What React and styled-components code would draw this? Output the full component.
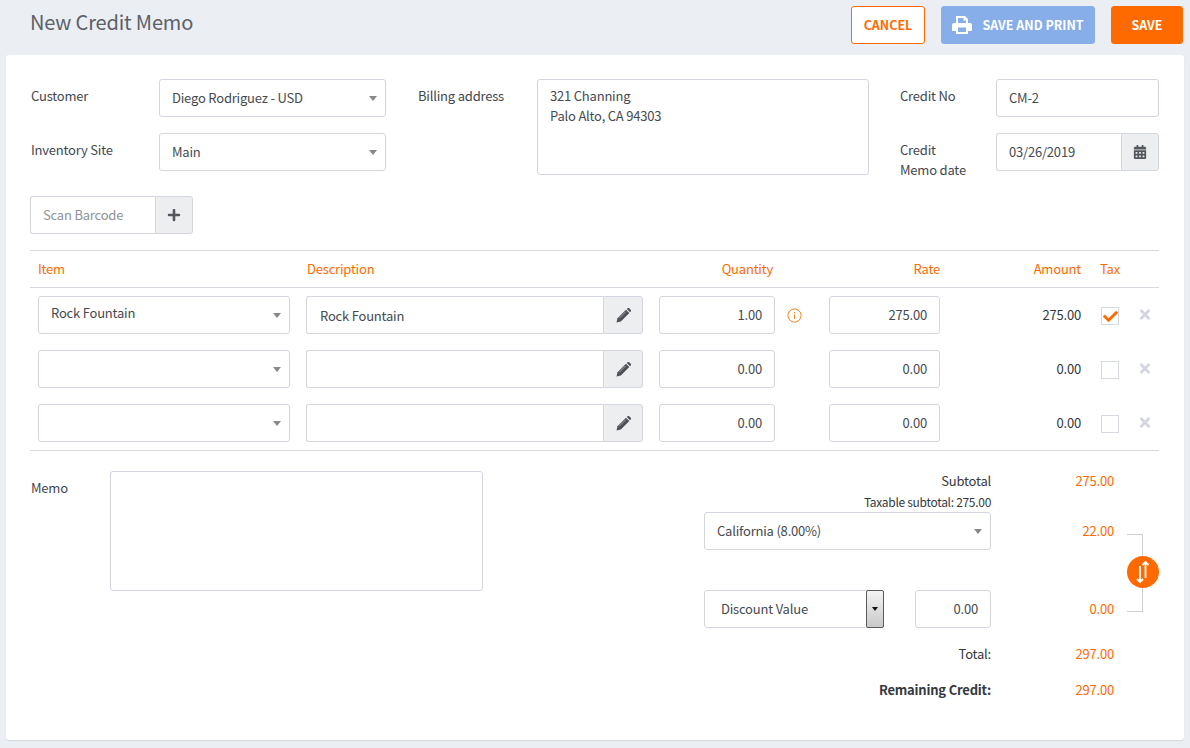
import React from 'react';
import styled, { createGlobalStyle } from 'styled-components';
import { FaCalendarAlt, FaCheck, FaPlus, FaTimes } from 'react-icons/fa';

const ORANGE = '#ff6a00';
const BORDER = '#d3d6e0';

const GlobalStyle = createGlobalStyle`
  html, body {
    margin: 0;
    padding: 0;
    background: #ebeef3;
  }
  body {
    font-family: "Noto Sans CJK SC", "Noto Sans", sans-serif;
    font-size: 13px;
    letter-spacing: -0.2px;
    line-height: 20px;
    color: #464a50;
  }
  * { box-sizing: border-box; }
`;

const Page = styled.div`
  width: 1190px;
  height: 748px;
  padding: 6px 6px 8px;
  overflow: hidden;
`;

const TopBar = styled.header`
  display: flex;
  align-items: flex-start;
  height: 49px;
`;

const Title = styled.h1`
  flex: 1;
  margin: 0;
  padding: 3px 0 0 24px;
  font-size: 20px;
  letter-spacing: -0.15px;
  line-height: 26px;
  font-weight: 400;
  color: #5c6168;
`;

const Actions = styled.div`
  display: flex;
  gap: 16px;
  padding-right: 1px;
`;

const Button = styled.button`
  display: flex;
  align-items: center;
  justify-content: center;
  gap: 10px;
  width: ${props => props.$width}px;
  height: 38px;
  padding: 0;
  border: 1px solid ${props => props.$outline ? ORANGE : props.$bg};
  border-radius: 3px;
  background: ${props => props.$outline ? '#fff' : props.$bg};
  color: ${props => props.$outline ? ORANGE : '#fff'};
  font: 600 12.5px/20px "Noto Sans CJK SC", "Noto Sans", sans-serif;
`;

const Card = styled.main`
  position: relative;
  height: 685px;
  padding: 24px 25px 0 24px;
  background: #fff;
  border-radius: 3px;
  box-shadow: 0 1px 1px #d3d8de;
`;

const Pair = styled.div`
  display: flex;
  width: ${props => props.$width}px;
  margin-bottom: 16px;
`;

const Label = styled.label`
  display: block;
  flex: none;
  width: ${props => props.$width}px;
  padding: 7px 0 0 ${props => props.$inset ? 1 : 0}px;
  color: #43474d;
`;

const Fields = styled.div`
  display: flex;
  gap: 31px;
  height: 117px;
`;

const Column = styled.div`
  display: flex;
  flex-direction: column;
`;

const Control = styled.div`
  position: relative;
  display: flex;
  align-items: center;
  flex: ${props => props.$width ? 'none' : 1};
  width: ${props => props.$width ? props.$width + 'px' : 'auto'};
  height: 38px;
  padding: ${props => props.$drop ? '2px' : '0'} 12px ${props => props.$lift ? '4px' : '0'} ${props => props.$indent || 12}px;
  background: #fff;
  border: 1px solid ${BORDER};
  border-radius: 3px;
  color: #464a50;
  justify-content: ${props => props.$right ? 'flex-end' : 'flex-start'};
`;

const Placeholder = styled.span`
  color: #8e9299;
`;

const Caret = styled.span`
  position: absolute;
  right: 8px;
  top: 16px;
  width: 0;
  height: 0;
  border-left: 4px solid transparent;
  border-right: 4px solid transparent;
  border-top: 5px solid #888;
`;

const AddressBox = styled.div`
  width: 332px;
  height: 96px;
  padding: 6px 12px;
  border: 1px solid ${BORDER};
  border-radius: 3px;
`;

const Group = styled.div`
  display: flex;
  width: ${props => props.$width ? props.$width + 'px' : 'auto'};
  height: 38px;
`;

const GroupField = styled(Control)`
  flex: 1;
  border-radius: 3px 0 0 3px;
  border-right: 0;
  min-width: 0;
`;

const Addon = styled.span`
  display: flex;
  flex: none;
  align-items: center;
  justify-content: center;
  width: ${props => props.$width}px;
  background: #edeef0;
  border: 1px solid ${BORDER};
  border-radius: 0 3px 3px 0;
  color: #53565c;
  font-size: ${props => props.$icon}px;
`;

const Barcode = styled(Group)`
  margin: 0 0 16px;
`;

const LineItems = styled.section`
  border-top: 1px solid #d5d9de;
  border-bottom: 1px solid #d5d9de;
  padding-bottom: 8px;
`;

const gridColumns = `
  display: grid;
  grid-template-columns: 252px 337px 116px 22px 111px 125px 26px 12px;
  column-gap: 16px;
  padding-left: 8px;
  align-items: center;
`;

const HeadRow = styled.div`
  ${gridColumns}
  height: 37px;
  margin-bottom: 8px;
  border-bottom: 1px solid #d5d9de;
  color: ${ORANGE};
`;

const HeadCell = styled.span`
  text-align: ${props => props.$align || 'left'};
  grid-column: ${props => props.$col};
  padding-right: ${props => props.$pad || 0}px;
  padding-left: ${props => props.$indent || 0}px;
`;

const ItemRow = styled.div`
  ${gridColumns}
  height: 38px;
  margin-bottom: 16px;
  &:last-child { margin-bottom: 0; }
`;

const InfoMark = styled.svg`
  width: 15px;
  height: 15px;
  margin-left: -4px;
  display: block;
`;

const Amount = styled.span`
  text-align: right;
  color: #35383d;
`;

const TaxBox = styled.span`
  display: flex;
  align-items: center;
  justify-content: center;
  justify-self: center;
  width: 18px;
  height: 18px;
  margin-top: 2px;
  border: 1px solid #d5d9de;
  color: ${ORANGE};
  font-size: 15px;
`;

const Remove = styled.span`
  display: flex;
  justify-content: center;
  margin-bottom: 1px;
  color: #d3d6e0;
  font-size: 15px;
`;

const Bottom = styled.section`
  display: flex;
  padding-top: 20px;
`;

const MemoLabel = styled.label`
  width: 80px;
  padding: 7px 0 0 1px;
  color: #43474d;
`;

const MemoBox = styled.div`
  width: 373px;
  height: 120px;
  border: 1px solid ${BORDER};
  border-radius: 3px;
`;

const Totals = styled.div`
  position: relative;
  margin-left: 221px;
  width: 410px;
`;

const TotalRow = styled.div`
  display: grid;
  grid-template-columns: 287px 123px;
  align-items: center;
  min-height: 20px;
  margin-top: ${props => props.$gap || 0}px;
`;

const TotalLabel = styled.span`
  text-align: right;
  font-weight: ${props => props.$bold ? 700 : 400};
  font-size: ${props => props.$small ? '12px' : '13px'};
  letter-spacing: ${props => props.$small ? '-0.3px' : '-0.2px'};
  color: #35383d;
`;

const TotalValue = styled.span`
  text-align: right;
  color: ${ORANGE};
`;

const DiscountControls = styled.div`
  display: flex;
  justify-content: space-between;
`;

const NativeArrow = styled.span`
  position: absolute;
  top: -1px;
  right: -1px;
  bottom: -1px;
  display: flex;
  align-items: center;
  justify-content: center;
  width: 18px;
  background: linear-gradient(#f4f4f4, #c9c9c9);
  border: 1px solid #5a5a5a;
  border-radius: 2px;
  &::after {
    content: '';
    border-left: 3px solid transparent;
    border-right: 3px solid transparent;
    border-top: 4px solid #111;
  }
`;

const Bracket = styled.span`
  position: absolute;
  left: 423px;
  top: 63px;
  width: 16px;
  height: 78px;
  border: 1px solid #ccd2d8;
  border-left: 0;
`;

const SwapButton = styled.span`
  position: absolute;
  left: 423px;
  top: 85px;
  display: flex;
  align-items: center;
  justify-content: center;
  width: 32px;
  height: 32px;
  background: ${ORANGE};
  border-radius: 50%;
`;

function PrintIcon() {
  return (
    <svg width="20" height="18" viewBox="0 0 20 18" fill="#fff" fillRule="evenodd">
      <path d="M4 0h9l3 3v4h2a2 2 0 0 1 2 2v5a1 1 0 0 1-1 1h-3v3H4v-3H1a1 1 0 0 1-1-1V9a2 2 0 0 1 2-2h2z M6 2v5h8V4.500h-2.500V2z M6 11.500v4.500h8v-4.500z" />
    </svg>
  );
}

function PencilIcon() {
  return (
    <svg width="15" height="15" viewBox="0 0 15 15" fill="#4d5056">
      <path d="M0.500 14.500l1-4.300L10 1.700l3.300 3.300-8.500 8.500z" />
      <path d="M10.800 1l.7-.7a1.200 1.200 0 0 1 1.700 0l1.500 1.500a1.200 1.200 0 0 1 0 1.700l-.7.7z" />
      <path d="M3.200 10.300L9.800 3.700" stroke="#edeef0" strokeWidth="0.5" />
    </svg>
  );
}

function Select({ value, width, lift }) {
  return (
    <Control $width={width} $lift={lift}>
      {value}
      <Caret />
    </Control>
  );
}

function Row({ item, description, qty, rate, amount, checked, info }) {
  return (
    <ItemRow>
      <Select value={item} lift />
      <Group>
        <GroupField $drop $indent={13}>{description}</GroupField>
        <Addon $width={40}><PencilIcon /></Addon>
      </Group>
      <Control $right>{qty}</Control>
      <span>
        {info && (
          <InfoMark viewBox="0 0 15 15" fill="none" stroke="#f58220">
            <circle cx="7.5" cy="7.5" r="6.6" />
            <path d="M7.5 6.4v4.4M7.5 4v1.2" />
          </InfoMark>
        )}
      </span>
      <Control $right>{rate}</Control>
      <Amount>{amount}</Amount>
      <TaxBox>{checked && <FaCheck />}</TaxBox>
      <Remove><FaTimes /></Remove>
    </ItemRow>
  );
}

export default function App() {
  return (
    <Page>
      <GlobalStyle />
      <TopBar>
        <Title>New Credit Memo</Title>
        <Actions>
          <Button $outline $width={74}>CANCEL</Button>
          <Button $bg="#88aeea" $width={154}><PrintIcon />SAVE AND PRINT</Button>
          <Button $bg={ORANGE} $width={72}>SAVE</Button>
        </Actions>
      </TopBar>
      <Card>
        <Fields>
          <Column>
            <Pair $width={357}>
              <Label $width={129} $inset>Customer</Label>
              <Select value="Diego Rodriguez - USD" width={227} />
            </Pair>
            <Pair $width={357}>
              <Label $width={129} $inset>Inventory Site</Label>
              <Select value="Main" width={227} />
            </Pair>
          </Column>
          <Pair $width={451}>
            <Label $width={119}>Billing address</Label>
            <AddressBox>321 Channing<br />Palo Alto, CA 94303</AddressBox>
          </Pair>
          <Column>
            <Pair $width={259}>
              <Label $width={96}>Credit No</Label>
              <Control $width={163}>CM-2</Control>
            </Pair>
            <Pair $width={259}>
              <Label $width={96}>Credit<br />Memo date</Label>
              <Group $width={163}>
                <GroupField>03/26/2019</GroupField>
                <Addon $width={38} $icon={14}><FaCalendarAlt /></Addon>
              </Group>
            </Pair>
          </Column>
        </Fields>
        <Barcode $width={163}>
          <GroupField><Placeholder>Scan Barcode</Placeholder></GroupField>
          <Addon $width={38} $icon={14}><FaPlus /></Addon>
        </Barcode>
        <LineItems>
          <HeadRow>
            <HeadCell $col="1">Item</HeadCell>
            <HeadCell $col="2" $indent={1}>Description</HeadCell>
            <HeadCell $col="3" $align="right" $pad={2}>Quantity</HeadCell>
            <HeadCell $col="5" $align="right">Rate</HeadCell>
            <HeadCell $col="6" $align="right">Amount</HeadCell>
            <HeadCell $col="7" $align="center">Tax</HeadCell>
          </HeadRow>
          <Row item="Rock Fountain" description="Rock Fountain" qty="1.00" rate="275.00" amount="275.00" checked info />
          <Row qty="0.00" rate="0.00" amount="0.00" />
          <Row qty="0.00" rate="0.00" amount="0.00" />
        </LineItems>
        <Bottom>
          <MemoLabel>Memo</MemoLabel>
          <MemoBox />
          <Totals>
            <TotalRow>
              <TotalLabel>Subtotal</TotalLabel>
              <TotalValue>275.00</TotalValue>
            </TotalRow>
            <TotalRow $gap={1}>
              <TotalLabel $small>Taxable subtotal: 275.00</TotalLabel>
            </TotalRow>
            <TotalRow>
              <Select value="California (8.00%)" />
              <TotalValue>22.00</TotalValue>
            </TotalRow>
            <TotalRow $gap={40}>
              <DiscountControls>
                <Control $width={180} $indent={16}>Discount Value<NativeArrow /></Control>
                <Control $width={76} $right>0.00</Control>
              </DiscountControls>
              <TotalValue>0.00</TotalValue>
            </TotalRow>
            <TotalRow $gap={16}>
              <TotalLabel>Total:</TotalLabel>
              <TotalValue>297.00</TotalValue>
            </TotalRow>
            <TotalRow $gap={16}>
              <TotalLabel $bold>Remaining Credit:</TotalLabel>
              <TotalValue>297.00</TotalValue>
            </TotalRow>
            <Bracket />
            <SwapButton>
              <svg width="18" height="24" viewBox="0 0 18 24" fill="none" stroke="#fff" strokeWidth="1.8">
                <path d="M11.500 18V2M8.500 5l3-3 3 3" />
                <path d="M6 6v16M3 19l3 3 3-3" />
              </svg>
            </SwapButton>
          </Totals>
        </Bottom>
      </Card>
    </Page>
  );
}
